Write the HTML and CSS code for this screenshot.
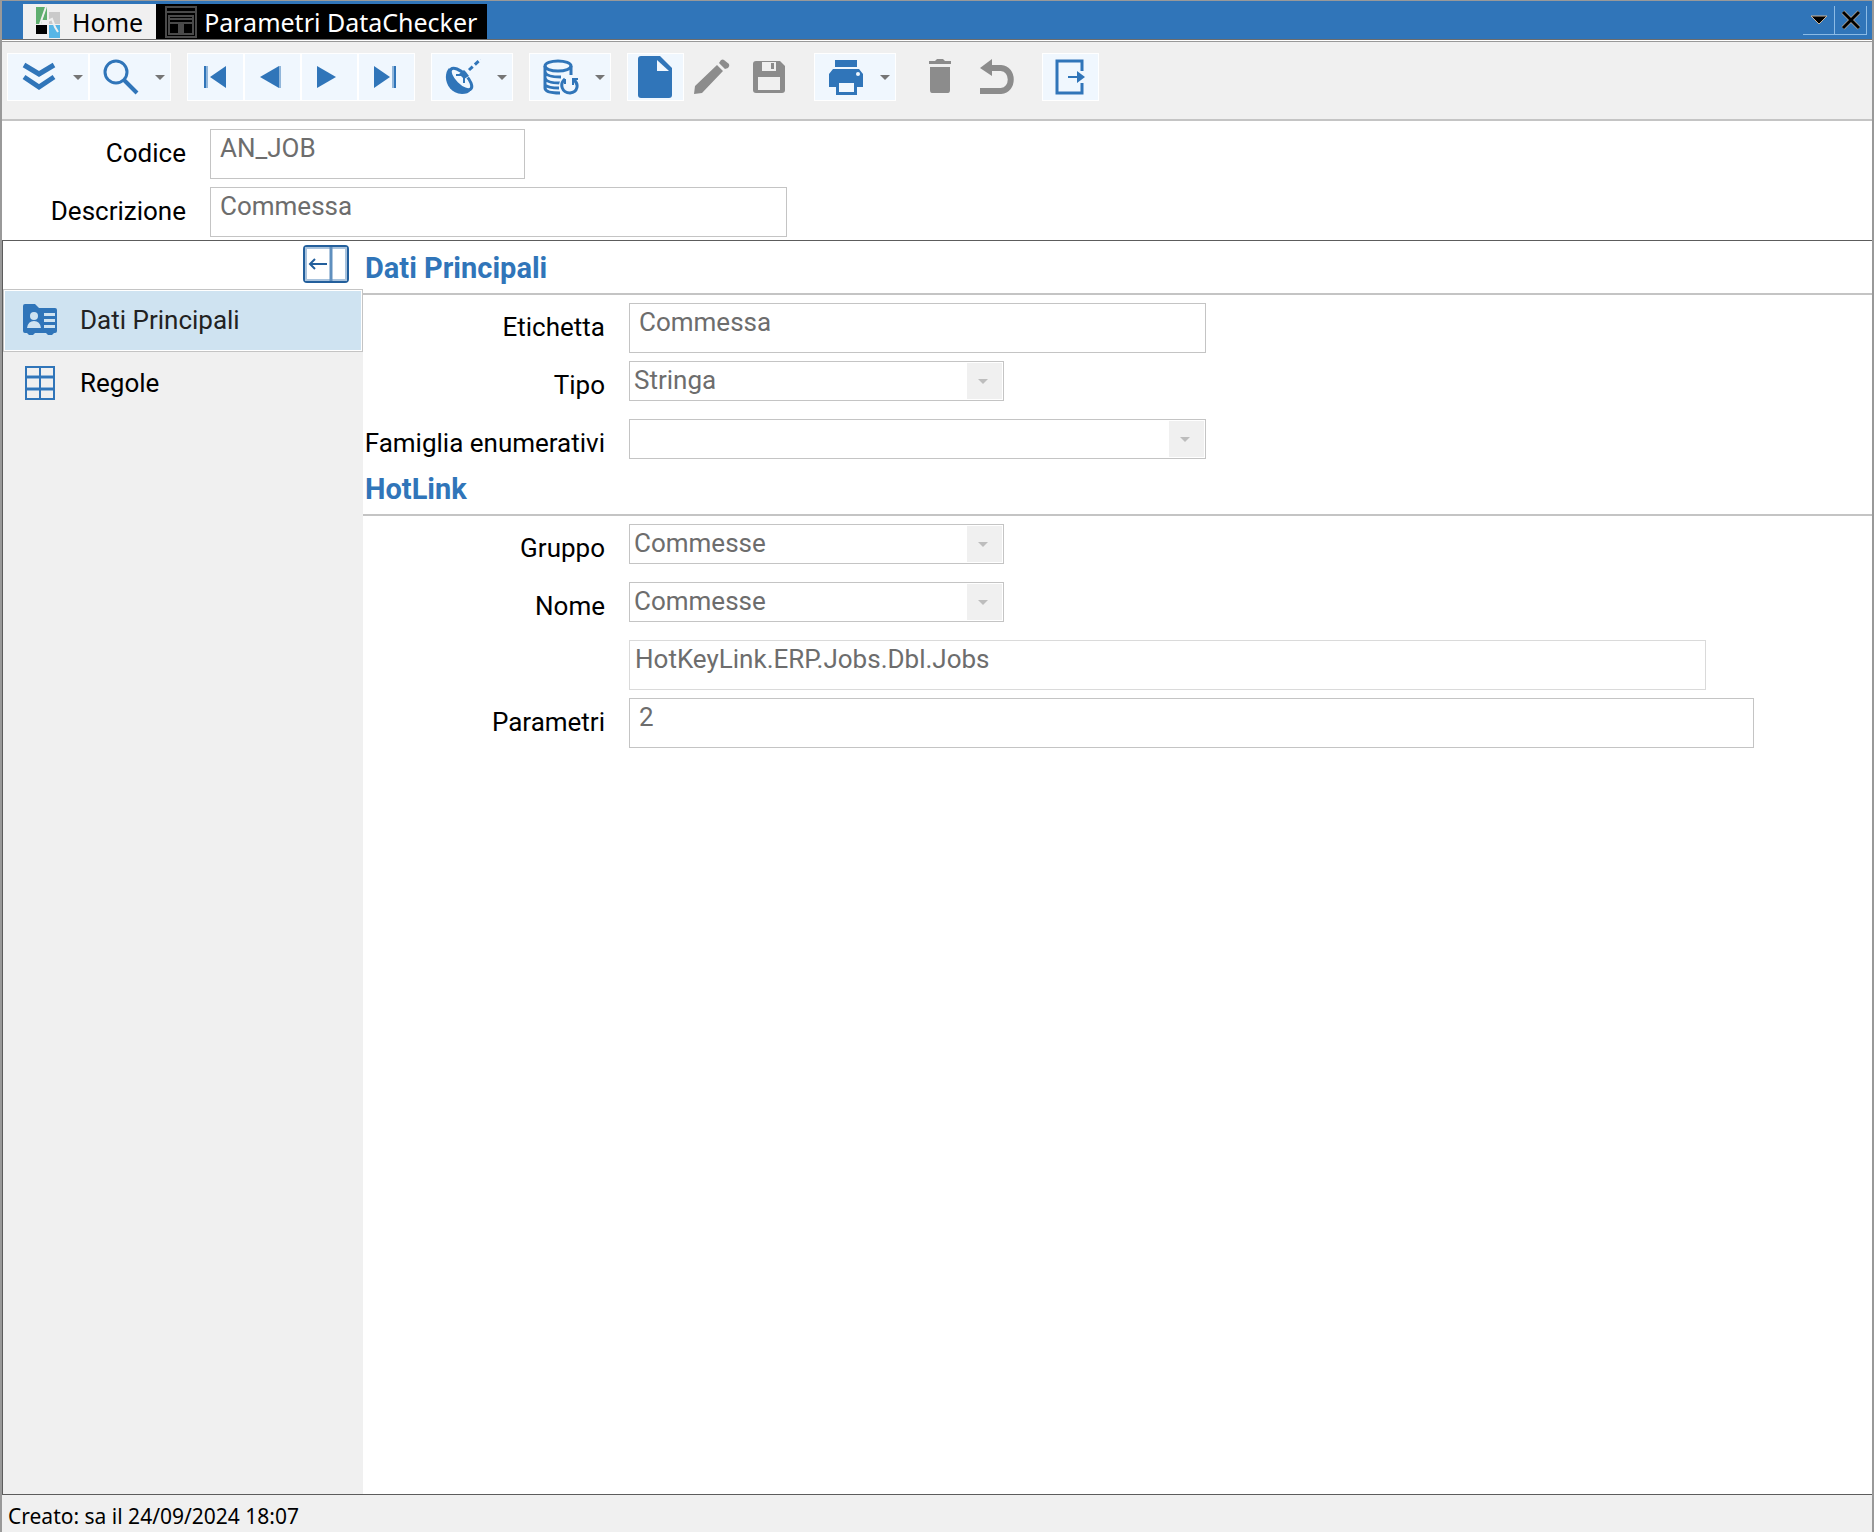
FILE: index.html
```html
<!DOCTYPE html>
<html lang="it">
<head>
<meta charset="utf-8">
<title>Parametri DataChecker</title>
<meta name="viewport" content="width=device-width, initial-scale=1">
<link rel="stylesheet" href="styles.css">
</head>
<body>
<div class="window">
  <header class="titlebar">
    <nav class="tabs" aria-label="Schede">
      <a class="tab tab-home" href="#home">
        <svg class="tab-logo" width="26" height="32" viewBox="0 0 26 32" aria-hidden="true">
          <path d="M1 1h10L6 18H1z" fill="#5fae6f"/><path d="M14 6h11v12H14z" fill="#cacaca"/>
          <path d="M1 19h11v9H1z" fill="#000"/><path d="M14 19h11v13H14z" fill="#57b6e6"/>
          <path d="M11 1h1v14H7z" fill="#5fae6f"/>
          <path d="M5 18 11 1M7 15h7M13 2v13l4-2 3 8 3 5" fill="none" stroke="#f0f0f0" stroke-width="2"/>
        </svg>Home</a>
      <a class="tab tab-active" href="#parametri" aria-current="page">
        <svg class="tab-form" width="32" height="32" viewBox="0 0 32 32" fill="none" stroke="#4a4a4a" stroke-width="2" aria-hidden="true">
          <path d="M1 1h30v30H1zM1 6h30M4 10h24v18H4zM4 13h24M4 17h24M14 17v11M18 17v11M16 17v11"/>
        </svg>Parametri DataChecker</a>
    </nav>
    <div class="window-controls">
      <button type="button" aria-label="Elenco schede"><svg width="18" height="10" viewBox="0 0 18 10"><path d="M1 1h16L9 9z" fill="#000" stroke="#c9b49b" stroke-width="1"/></svg></button>
      <button type="button" aria-label="Chiudi"><svg width="20" height="20" viewBox="0 0 20 20" fill="none"><path d="m2 2 16 16M18 2 2 18" stroke="#c9b49b" stroke-width="4"/><path d="m2 2 16 16M18 2 2 18" stroke="#000" stroke-width="3"/></svg></button>
    </div>
  </header>

  <div class="toolbar" role="toolbar" aria-label="Comandi">
    <div class="group">
      <button type="button" class="tool split" aria-label="Espandi">
        <svg width="36" height="36" viewBox="0 0 36 36" fill="none" stroke="#3075b9" stroke-width="5"><path d="m3 6 15 9 15-9M3 18l15 10 15-10"/></svg><span class="caret"></span></button>
      <button type="button" class="tool split" aria-label="Cerca">
        <svg width="36" height="36" viewBox="0 0 36 36" fill="none" stroke="#3075b9"><circle cx="13" cy="13" r="11" stroke-width="3"/><path d="m21 21 13 13" stroke-width="4"/></svg><span class="caret"></span></button>
    </div>
    <div class="group">
      <button type="button" class="tool" aria-label="Primo"><svg width="36" height="36" viewBox="0 0 36 36" fill="#3075b9"><path d="M7 7h2v22H7zM29 7v22L13 18z"/><path d="M9 7h2v22H9z" fill="#91b6da"/></svg></button>
      <button type="button" class="tool" aria-label="Precedente"><svg width="36" height="36" viewBox="0 0 36 36" fill="#3075b9"><path d="M25 7v22L6 18z"/><path d="M25 7h2v22h-2z" fill="#91b6da"/></svg></button>
      <button type="button" class="tool" aria-label="Successivo"><svg width="36" height="36" viewBox="0 0 36 36" fill="#3075b9"><path d="M6 7v22l19-11z"/></svg></button>
      <button type="button" class="tool" aria-label="Ultimo"><svg width="36" height="36" viewBox="0 0 36 36" fill="#3075b9"><path d="M6 7v22l16-11zM26 7h2v22h-2z"/><path d="M24 7h2v22h-2z" fill="#91b6da"/></svg></button>
    </div>
    <div class="group">
      <button type="button" class="tool split" aria-label="Radar">
        <svg width="36" height="36" viewBox="0 0 36 36" fill="none"><path d="M4 9C-3 17 2 34 17 35c4 0 7-1 9-4Z" fill="#3075b9"/><ellipse cx="16" cy="20" rx="6" ry="14" transform="rotate(-45 16 20)" fill="#f0f7fe" stroke="#3075b9" stroke-width="3"/><path d="m19 17 8-7" stroke="#f0f7fe" stroke-width="7"/><path d="M11 16h7M19 17v7" stroke="#3075b9" stroke-width="2"/><path d="m14 15 5-4 2 2 3 4-5 3z" fill="#3075b9"/><path d="m24 11 12-11" stroke="#3075b9" stroke-width="3" stroke-dasharray="5 3"/></svg><span class="caret"></span></button>
    </div>
    <div class="group">
      <button type="button" class="tool split" aria-label="Aggiorna dati">
        <svg width="36" height="36" viewBox="0 0 36 36" fill="none" stroke="#3075b9" stroke-width="3"><ellipse cx="15" cy="7" rx="13" ry="5"/><path d="M2 7v22c0 4 7 5 15 5M28 7v9M2 13c1 4 8 5 16 5M2 19c1 4 8 5 15 5M2 26c2 2 7 3 14 3"/><circle cx="27" cy="27" r="8" stroke="#f0f7fe" stroke-width="6"/><path d="M22 20c-6 5-3 14 5 14 8-1 9-9 4-13"/><path d="M22 20v5M30 26v-6h5" stroke-width="2"/></svg><span class="caret"></span></button>
    </div>
    <div class="group">
      <button type="button" class="tool" aria-label="Nuovo"><svg width="36" height="44" viewBox="0 0 36 44"><path d="M4 1h19l12 12v27q0 3-3 3H4q-3 0-3-3V4q0-3 3-3z" fill="#3075b9"/><path d="M20 5v11h12z" fill="#f0f7fe"/></svg></button>
      <button type="button" class="tool" aria-label="Modifica" disabled><svg width="36" height="36" viewBox="0 0 36 36" fill="#8c8c8c"><path d="m0 35 1-8L23 6l6 6L8 34zM25 4l2-3q2-1 3 0l5 4q1 2-1 4l-3 1z"/></svg></button>
      <button type="button" class="tool" aria-label="Salva" disabled><svg width="36" height="36" viewBox="0 0 36 36"><path d="M5 2h24l5 5v24q0 3-3 3H5q-3 0-3-3V5q0-3 3-3z" fill="#8c8c8c"/><path d="M11 3h14v9H11zM7 18h22v13H7z" fill="#f0f0f0"/><path d="M20 4h3v6h-3z" fill="#8c8c8c"/></svg></button>
    </div>
    <div class="group">
      <button type="button" class="tool split" aria-label="Stampa">
        <svg width="36" height="36" viewBox="0 0 36 36"><path d="M7 1h22v7H7zM5 10h26l4 5v13h-6v8H8v-8H1V15z" fill="#3075b9"/><path d="M11 24h15v9H11z" fill="#f0f7fe"/><circle cx="30" cy="15" r="2" fill="#f0f7fe"/></svg><span class="caret"></span></button>
    </div>
    <div class="group">
      <button type="button" class="tool" aria-label="Elimina" disabled><svg width="36" height="36" viewBox="0 0 36 36" fill="#8c8c8c"><path d="M7 2h6l2-2h6l2 2h6v3H7zM8 8h20v23q0 3-2 3H10q-2 0-2-3z"/></svg></button>
      <button type="button" class="tool" aria-label="Annulla" disabled><svg width="36" height="36" viewBox="0 0 36 36" fill="none"><path d="M9 9h13c13 1 13 22 0 23H1" stroke="#8c8c8c" stroke-width="6"/><path d="M1 9 13 0v17z" fill="#8c8c8c"/></svg></button>
    </div>
    <div class="group">
      <button type="button" class="tool" aria-label="Esci"><svg width="36" height="36" viewBox="0 0 36 36"><path d="M30 12V2H5v32h25V24" fill="none" stroke="#3075b9" stroke-width="3"/><path d="M16 17h9v-5l8 6-8 6v-5h-9z" fill="#3075b9"/></svg></button>
    </div>
  </div>

  <form class="record">
    <div class="row"><label for="codice">Codice</label><input id="codice" class="field w-code" value="AN_JOB" disabled></div>
    <div class="row"><label for="descrizione">Descrizione</label><input id="descrizione" class="field w-mid" value="Commessa" disabled></div>
  </form>

  <div class="content">
    <aside class="sidebar">
      <div class="sidebar-head">
        <button type="button" class="collapse" aria-label="Comprimi menu"><svg width="46" height="38" viewBox="0 0 46 38" fill="none" stroke="#235f9c"><rect x="1" y="1" width="44" height="36" rx="3" stroke-width="2"/><path d="M3 3h40v32H3z" stroke="#a9c3dd" stroke-width="2"/><path d="M28 2v34" stroke="#5f8fbe" stroke-width="3"/><path d="M24 19H7m5-5-5 5 5 5" stroke-width="2"/></svg></button>
      </div>
      <nav aria-label="Sezioni">
        <a class="nav-item selected" href="#dati" aria-current="true">
          <svg width="36" height="36" viewBox="0 0 36 36"><path d="M1 4q0-2 2-2h10l4 4h16q2 0 2 2v21q0 2-2 2h-1l-2 2h-4l-2-2H13l-2 2H7l-2-2H3q-2 0-2-2z" fill="#3075b9"/><circle cx="12" cy="14" r="4" fill="#cfe3f1"/><path d="M5 26q1-7 7-7t7 7zM22 11h11v3H22zM22 17h11v3H22zM22 23h11v3H22z" fill="#cfe3f1"/></svg>
          Dati Principali</a>
        <a class="nav-item" href="#regole">
          <svg width="36" height="36" viewBox="0 0 36 36" fill="none" stroke="#3075b9"><path d="M4 12h28M4 24h28" stroke="#91b6da" stroke-width="4"/><path d="M4 2h28v32H4zM18 2v32M4 24h28M4 12h28" stroke-width="2"/></svg>
          Regole</a>
      </nav>
    </aside>
    <main class="panel">
      <form>
        <h2>Dati Principali</h2>
        <div class="fields">
          <div class="row"><label for="etichetta">Etichetta</label><input id="etichetta" class="field w-mid" value="Commessa" disabled></div>
          <div class="row"><label for="tipo">Tipo</label><span class="combo w-short"><select id="tipo" disabled><option>Stringa</option></select></span></div>
          <div class="row"><label for="famiglia">Famiglia enumerativi</label><span class="combo w-mid"><select id="famiglia" disabled><option></option></select></span></div>
        </div>
        <h2>HotLink</h2>
        <div class="fields">
          <div class="row"><label for="gruppo">Gruppo</label><span class="combo w-short"><select id="gruppo" disabled><option>Commesse</option></select></span></div>
          <div class="row"><label for="nome">Nome</label><span class="combo w-short"><select id="nome" disabled><option>Commesse</option></select></span></div>
          <div class="row"><span></span><input class="field readonly w-wide" aria-label="Percorso HotLink" value="HotKeyLink.ERP.Jobs.Dbl.Jobs" disabled></div>
          <div class="row"><label for="parametri">Parametri</label><input id="parametri" class="field w-full" value="2" disabled></div>
        </div>
      </form>
    </main>
  </div>

  <footer class="status">Creato: sa il 24/09/2024 18:07</footer>
</div>
</body>
</html>
```
FILE: styles.css
```css
:root {
  --blue: #3075b9;
  --grey: #f0f0f0;
  --line: #c4c4c4;
  --frame: #999;
  --ui: Roboto, sans-serif;
  --system: "Noto Sans", sans-serif;
}

* { box-sizing: border-box; }

body {
  margin: 0;
  font: 26px/32px var(--ui);
  color: #000;
  background: #fff;
}

svg { display: block; flex: none; }

a { color: inherit; text-decoration: none; }

button { padding: 0; border: 0; background: none; font: inherit; }

.window {
  display: flex;
  flex-direction: column;
  min-height: 100vh;
  border: solid var(--frame);
  border-width: 1px 2px 0;
}

/* Title bar */
.titlebar {
  display: flex;
  justify-content: space-between;
  height: 39px;
  padding-left: 21px;
  background: var(--blue);
  border-bottom: 1px solid #6c6c6c;
}

.tabs { display: flex; padding-top: 3px; }

.tab {
  display: flex;
  align-items: center;
  font: 25px/34px var(--system);
  white-space: nowrap;
  padding-top: 1px;
}

.tab-home { gap: 11px; padding-right: 13px; padding-left: 12px; background: var(--grey); }
.tab-active { gap: 7px; padding-right: 10px; padding-left: 9px; background: #000; color: #fff; }

.window-controls { display: flex; padding: 5px 5px 4px 0; }

.window-controls button {
  display: grid;
  place-items: center;
  width: 32px;
  border: solid #8cbbe5;
  border-width: 0 1px 1px 0;
}

/* Toolbar */
.toolbar {
  display: flex;
  flex-wrap: wrap;
  gap: 16px;
  padding: 11px 5px 18px;
  margin-top: 1px;
  background: var(--grey);
  border-top: 1px solid var(--frame);
  border-bottom: 2px solid var(--line);
}

.group { display: flex; }

.tool {
  display: flex;
  align-items: center;
  justify-content: center;
  width: 57px;
  height: 48px;
  padding-right: 1px;
  background: #f0f7fe;
  border: 1px solid #fff;
}

.tool.split { width: 82px; gap: 16px; padding: 0 0 0 8px; }
.tool:disabled { background: none; border-color: transparent; }

.caret {
  border: 5px solid transparent;
  border-top-color: #757575;
  border-bottom: 0;
}

/* Form rows */
.row {
  display: grid;
  grid-template-columns: 242px minmax(0, 1fr);
  column-gap: 24px;
  height: 50px;
}

.row label {
  align-self: center;
  justify-self: end;
  padding-bottom: 2px;
  white-space: nowrap;
}

.record {
  display: grid;
  gap: 8px;
  padding: 8px 0 3px;
}

.record .row { grid-template-columns: 184px minmax(0, 1fr); }

.field,
.combo {
  max-width: 100%;
  border: 1px solid var(--line);
  background: #fff;
}

.field {
  height: 50px;
  padding: 0 9px 12px;
  font: inherit;
  color: #6d6d6d;
}

.readonly { padding-left: 5px; border-color: #dadada; }

.combo {
  display: grid;
  grid-template-columns: minmax(0, 1fr) 37px;
  height: 40px;
}

.combo::before {
  content: "";
  grid-area: 1 / 2;
  margin: 1px;
  background: var(--grey);
}

.combo::after {
  content: "";
  grid-area: 1 / 2;
  place-self: center;
  margin-right: 4px;
  border: 5px solid transparent;
  border-top-color: #bdbdbd;
  border-bottom: 0;
}

.combo select {
  grid-area: 1 / 1;
  appearance: none;
  padding: 0 4px 2px;
  border: 0;
  background: none;
  font: inherit;
  color: #6d6d6d;
  opacity: 1;
}

.w-code { width: 315px; }
.w-short { width: 375px; }
.w-mid { width: 577px; }
.w-wide { width: 1077px; }
.w-full { width: 1125px; }

/* Sidebar and panel */
.content {
  display: flex;
  flex: 1;
  border: solid #5c5c5c;
  border-width: 1px 0 1px 1px;
}

.sidebar { flex: 0 0 360px; background: var(--grey); }

.sidebar-head {
  display: flex;
  justify-content: flex-end;
  height: 48px;
  padding: 4px 14px 0;
  background: #fff;
}

.collapse { height: 38px; }

.nav-item {
  display: flex;
  align-items: center;
  gap: 22px;
  height: 63px;
  padding: 0 0 2px 18px;
  border: 1px solid transparent;
}

.nav-item.selected {
  background: #cfe3f1;
  border-color: var(--line);
  box-shadow: inset 0 0 0 1px #fff;
  color: #222;
}

.panel { flex: 1; min-width: 0; }

h2 {
  margin: 0;
  padding: 4px 2px 9px;
  border-bottom: 2px solid var(--line);
  color: var(--blue);
  font: 700 29px/32px var(--ui);
}

.panel form { padding-top: 7px; }

.fields {
  display: grid;
  gap: 8px;
  padding-top: 8px;
}

/* Status bar */
.status {
  padding: 9px 6px 3px;
  background: var(--grey);
  font: 21px/25px var(--system);
}
```
